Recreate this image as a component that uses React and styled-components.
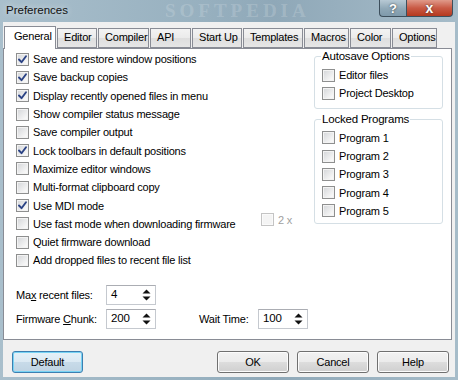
import React from 'react'
import styled, { createGlobalStyle } from 'styled-components'

const GlobalStyle = createGlobalStyle`
  html, body { margin: 0; padding: 0; background: #b9cbd6; }
  body { font-family: "Liberation Sans", Arial, sans-serif; }
`

const tabs = [
  { label: 'General', width: 52 },
  { label: 'Editor', width: 40 },
  { label: 'Compiler', width: 51 },
  { label: 'API', width: 41 },
  { label: 'Start Up', width: 50 },
  { label: 'Templates', width: 60 },
  { label: 'Macros', width: 45 },
  { label: 'Color', width: 41 },
  { label: 'Options', width: 45 },
]

const options = [
  { label: 'Save and restore window positions', checked: true },
  { label: 'Save backup copies', checked: true },
  { label: 'Display recently opened files in menu', checked: true },
  { label: 'Show compiler status message' },
  { label: 'Save compiler output' },
  { label: 'Lock toolbars in default positions', checked: true },
  { label: 'Maximize editor windows' },
  { label: 'Multi-format clipboard copy' },
  { label: 'Use MDI mode', checked: true },
  { label: 'Use fast mode when downloading firmware', extra: true },
  { label: 'Quiet firmware download' },
  { label: 'Add dropped files to recent file list' },
]

const Check = ({ checked, disabled }) => (
  <Box disabled={disabled}>
    {checked && (
      <svg width="11" height="11" viewBox="0 0 11 11">
        <path d="M2 5.5 L4.5 8.2 L9 2.2" fill="none" stroke="#2b4385" strokeWidth="1.9" strokeLinecap="round" strokeLinejoin="round" />
      </svg>
    )}
  </Box>
)

const Spin = ({ value }) => (
  <SpinBox>
    <SpinValue>{value}</SpinValue>
    <svg width="9" height="14" viewBox="0 0 9 14">
      <path d="M0.5 5.5 L4.5 1.5 L8.5 5.5 Z" fill="#111" />
      <path d="M0.5 8.5 L4.5 12.5 L8.5 8.5 Z" fill="#111" />
    </svg>
  </SpinBox>
)

const App = () => {
  return (
    <>
      <GlobalStyle />
      <Window>
        <TitleBar>
          <Title>Preferences</Title>
          <Watermark>SOFTPEDIA</Watermark>
          <Caption>
            <HelpBtn>?</HelpBtn>
            <CloseBtn>x</CloseBtn>
          </Caption>
        </TitleBar>
        <Body>
          <TabStrip>
            {tabs.map((t, i) => (
              <Tab key={t.label} active={i === 0} width={t.width}>{t.label}</Tab>
            ))}
          </TabStrip>
          <Panel>
            <TopArea>
              <OptionList>
                {options.map((o) => (
                  <Row key={o.label}>
                    <Check checked={o.checked} />
                    <span>{o.label}</span>
                    {o.extra && (
                      <Doubler>
                        <Check disabled />
                        <span>2 x</span>
                      </Doubler>
                    )}
                  </Row>
                ))}
              </OptionList>
              <Groups>
                <GroupBox>
                  <Legend>Autosave Options</Legend>
                  <Row><Check /><span>Editor files</span></Row>
                  <Row><Check /><span>Project Desktop</span></Row>
                </GroupBox>
                <GroupBox second>
                  <Legend>Locked Programs</Legend>
                  {[1, 2, 3, 4, 5].map((n) => (
                    <Row key={n}><Check /><span>Program {n}</span></Row>
                  ))}
                </GroupBox>
              </Groups>
            </TopArea>
            <Fields>
              <FieldRow>
                <FieldLabel>Ma<u>x</u> recent files:</FieldLabel>
                <Spin value="4" />
              </FieldRow>
              <FieldRow>
                <FieldLabel>Firmware <u>C</u>hunk:</FieldLabel>
                <Spin value="200" />
                <FieldLabel narrow>Wait Time:</FieldLabel>
                <Spin value="100" />
              </FieldRow>
            </Fields>
          </Panel>
          <ButtonRow>
            <Button primary>Default</Button>
            <Spacer />
            <Button>OK</Button>
            <Button>Cancel</Button>
            <Button>Help</Button>
          </ButtonRow>
        </Body>
      </Window>
    </>
  )
}

const Window = styled.div`
  width: 458px;
  height: 380px;
  display: flex;
  flex-direction: column;
  background: linear-gradient(90deg, #a9bfcc 0%, #97b0bf 45%, #8fa8b8 60%, #a6bcc9 100%);
  overflow: hidden;
`
const TitleBar = styled.div`
  height: 22px;
  display: flex;
  align-items: flex-start;
  padding-left: 6px;
  position: relative;
`
const Title = styled.div`
  font-size: 11.5px;
  line-height: 14px;
  margin-top: 3px;
  color: #111;
  text-shadow: 0 0 6px rgba(255, 255, 255, 0.7);
`
const Watermark = styled.div`
  position: absolute;
  left: 165px;
  top: 0;
  height: 22px;
  line-height: 22px;
  font-family: "Liberation Serif", serif;
  font-weight: 700;
  font-size: 19px;
  letter-spacing: 4px;
  color: rgba(255, 255, 255, 0.18);
`
const Caption = styled.div`
  margin-left: auto;
  margin-right: 5px;
  display: flex;
  height: 17px;
`
const CaptionBtn = styled.div`
  height: 16px;
  display: flex;
  align-items: center;
  justify-content: center;
  font-weight: 700;
  font-size: 13px;
  color: #fff;
  border: 1px solid #3d4f5c;
  border-top: none;
  text-shadow: 0 0 2px #333;
`
const HelpBtn = styled(CaptionBtn)`
  width: 26px;
  border-radius: 0 0 0 4px;
  border-right: none;
  background: linear-gradient(#b7c9d4, #8ea7b6 55%, #7f9aab);
`
const CloseBtn = styled(CaptionBtn)`
  width: 45px;
  border-radius: 0 0 4px 0;
  background: linear-gradient(#e09a8a, #c95a45 50%, #b5391f);
  font-size: 14px;
`
const Body = styled.div`
  flex: 1;
  margin: 0 3px 3px 3px;
  background: #f0f0f0;
  display: flex;
  flex-direction: column;
  padding-top: 4px;
`
const TabStrip = styled.div`
  height: 22px;
  display: flex;
  align-items: flex-end;
  gap: 1px;
  padding-left: 1px;
  position: relative;
  z-index: 1;
`
const Tab = styled.div`
  width: ${(p) => p.width}px;
  height: ${(p) => (p.active ? 23 : 20)}px;
  box-sizing: border-box;
  border: 1px solid #898c95;
  border-bottom: ${(p) => (p.active ? 'none' : '1px solid #898c95')};
  background: ${(p) => (p.active ? '#fff' : 'linear-gradient(#f3f3f3, #ebebeb 50%, #dedede 51%, #e6e6e6)')};
  margin-bottom: ${(p) => (p.active ? -1 : 0)}px;
  font-size: 11px;
  letter-spacing: -0.2px;
  color: #000;
  padding-left: ${(p) => (p.active ? 9 : 6)}px;
  line-height: ${(p) => (p.active ? 19 : 17)}px;
  white-space: nowrap;
`
const Panel = styled.div`
  height: 292px;
  box-sizing: border-box;
  margin-right: 3px;
  border: 1px solid #898c95;
  background: #fff;
  display: flex;
  flex-direction: column;
`
const TopArea = styled.div`
  display: flex;
  gap: 22px;
  padding-left: 12px;
`
const OptionList = styled.div`
  width: 276px;
  padding-top: 1px;
`
const Row = styled.div`
  height: 18.3px;
  display: flex;
  align-items: center;
  gap: 4px;
  font-size: 11px;
  letter-spacing: -0.2px;
  color: #000;
  white-space: nowrap;
`
const Box = styled.span`
  width: 13px;
  height: 13px;
  box-sizing: border-box;
  flex: none;
  border: 1px solid ${(p) => (p.disabled ? '#c4c4c4' : '#8e8f8f')};
  background: ${(p) => (p.disabled ? '#f4f4f4' : 'linear-gradient(135deg, #d3d5d8, #f7f7f7 80%)')};
  box-shadow: inset 0 0 0 1px ${(p) => (p.disabled ? '#fafafa' : '#f3f3f3')};
  display: flex;
  align-items: center;
  justify-content: center;
`
const Doubler = styled.div`
  margin-left: auto;
  margin-top: -8px;
  display: flex;
  align-items: center;
  gap: 4px;
  color: #a0a0a0;
`
const Groups = styled.div`
  width: 129px;
  display: flex;
  flex-direction: column;
  gap: 4px;
  padding-top: 1px;
`
const GroupBox = styled.fieldset`
  margin: 0;
  padding: 3px 0 5px 7px;
  border: 1px solid #d5dfe5;
  border-radius: 3px;
  padding-bottom: ${(p) => (p.second ? 3 : 5)}px;
`
const Legend = styled.legend`
  padding: 0 1px;
  margin-left: -1px;
  font-size: 11.5px;
  line-height: 13px;
  letter-spacing: -0.2px;
  color: #000;
`
const Fields = styled.div`
  margin-top: auto;
  padding: 0 0 10px 12px;
  display: flex;
  flex-direction: column;
  gap: 4px;
`
const FieldRow = styled.div`
  display: flex;
  align-items: center;
  font-size: 11px;
  letter-spacing: -0.2px;
`
const FieldLabel = styled.span`
  width: ${(p) => (p.narrow ? 59 : 90)}px;
  margin-left: ${(p) => (p.narrow ? 43 : 0)}px;
  white-space: nowrap;
  color: #000;
`
const SpinBox = styled.div`
  width: 50px;
  height: 20px;
  box-sizing: border-box;
  border: 1px solid #c5c9cf;
  border-top-color: #abadb3;
  background: #fff;
  display: flex;
  align-items: center;
  padding: 0 4px 0 4px;
`
const SpinValue = styled.span`
  flex: 1;
  font-size: 11.5px;
  margin-top: -3px;
`
const ButtonRow = styled.div`
  display: flex;
  gap: 8px;
  padding: 11px 6px 0 9px;
`
const Spacer = styled.div`
  flex: 1;
`
const Button = styled.div`
  width: ${(p) => (p.primary ? 71 : 72)}px;
  height: 22px;
  box-sizing: border-box;
  border: 1px solid ${(p) => (p.primary ? '#3c7fb1' : '#707070')};
  border-radius: 3px;
  background: ${(p) =>
    p.primary
      ? 'linear-gradient(#e5f1f8, #dbe9f3 50%, #c8dbe9 51%, #bfd3e2)'
      : 'linear-gradient(#f2f2f2, #ebebeb 50%, #dddddd 51%, #cfcfcf)'};
  box-shadow: inset 0 0 0 1px ${(p) => (p.primary ? '#78d3f4' : '#fcfcfc')};
  display: flex;
  align-items: center;
  justify-content: center;
  font-size: 11px;
  letter-spacing: -0.2px;
  color: #000;
`

export default App
